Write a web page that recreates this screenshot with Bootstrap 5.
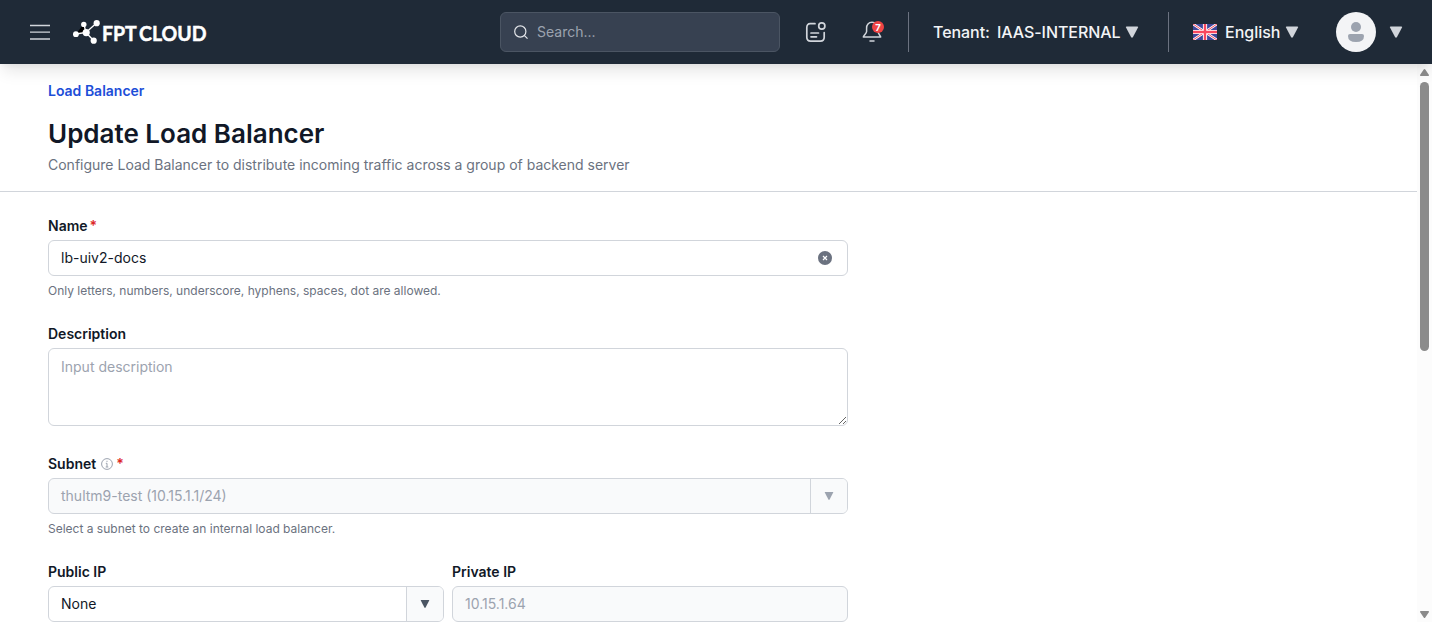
<!DOCTYPE html>
<html lang="en">
<head>
<meta charset="utf-8">
<meta name="viewport" content="width=device-width, initial-scale=1">
<title>Update Load Balancer</title>
<link href="https://cdn.jsdelivr.net/npm/bootstrap@5.3.0/dist/css/bootstrap.min.css" rel="stylesheet">
<style>
  body { font-family: Inter, "Liberation Sans", sans-serif; font-size: 14px; line-height: 20px; color: #111827; height: 622px; overflow: hidden; }
  svg { display: block; flex: none; }
  .topbar { height: 64px; background: #1f2a37; color: #f3f4f6; font-size: 16px; line-height: 24px; font-weight: 500; padding: 0 29px 0 30px; z-index: 5; box-shadow: 0 10px 15px -3px rgba(0,0,0,.1), 0 4px 6px -2px rgba(0,0,0,.05); }
  .search-box { width: 280px; height: 40px; background: #374151; border: 1px solid #4b5563; border-radius: 6px; padding-left: 13px; color: #9ca3af; font-size: 14px; font-weight: 400; }
  .vline { width: 1px; height: 40px; background: #6b7280; }
  .avatar { width: 40px; height: 40px; background: #f3f4f6; }
  .page-body { height: 558px; }
  .page-head { padding: 17px 48px 0; height: 128px; border-bottom: 1px solid #d1d5db; }
  .crumb { color: #1d4ed8; font-weight: 600; text-decoration: none; }
  .page-title { font-size: 26px; line-height: 32px; font-weight: 600; margin: 17px 0 5px; }
  .sub { color: #6b7280; }
  .form-area { width: 800px; margin-left: 48px; padding-top: 24px; }
  .form-label { font-weight: 600; margin-bottom: 4px; display: flex; align-items: center; height: 20px; }
  .req { color: #dc2626; margin-left: 2px; }
  .form-control, .field { font-size: 14px; line-height: 20px; height: 36px; padding: 7px 12px; border: 1px solid #d1d5db; border-radius: 6px; color: #111827; }
  input.form-control { padding: 6px 12px 8px; }
  .form-control::placeholder { color: #9ca3af; }
  .form-control:disabled, .field.off { background: #f9fafb; color: #9ca3af; }
  textarea.form-control { height: 78px; padding-top: 8px; resize: vertical; }
  .field { padding: 0; overflow: hidden; background: #fff; }
  .field .drop { width: 37px; border-left: 1px solid #d1d5db; background: #f9fafb; }
  .hint { font-size: 12px; line-height: 16px; color: #6b7280; margin-top: 7px; }
  .rail { width: 15px; background: #fcfcfc; padding: 5px 3px 4px 3px; }
  .thumb { width: 9px; height: 269px; border-radius: 5px; background: #8b8b8b; margin-top: 6px; }
</style>
</head>
<body>
<header class="topbar d-flex align-items-center position-relative">
  <svg width="20" height="16" viewBox="0 0 20 16" stroke="#d1d5db" stroke-width="1.3"><path d="M0 1.5h20M0 8.2h20M0 15h20"/></svg>
  <svg style="margin-left:23px;margin-top:-2px" width="140" height="36" viewBox="0 -4 140 36">
    <g stroke="#fff" stroke-width="1.300"><path d="M3 17L13 15.500L10.800 7M13 15.500L23.500 6M13 15.500L20.500 23.500"/></g>
    <g fill="#fff"><circle cx="2.900" cy="17.200" r="2.900"/><circle cx="10.800" cy="7.400" r="2.700"/><circle cx="23.700" cy="6.200" r="3.100"/><circle cx="20.700" cy="23.700" r="3.100"/><circle cx="13.200" cy="15.600" r="3.600"/></g>
    <text x="29" y="24" fill="#fff" stroke="#fff" stroke-width=".5" font-family="Lato, sans-serif" font-size="21.500" font-weight="700" word-spacing="-2" textLength="104.500" lengthAdjust="spacingAndGlyphs">FPT CLOUD</text>
  </svg>
  <div class="search-box d-flex align-items-center" style="margin-left:287px">
    <svg width="15" height="15" viewBox="0 0 15 15" fill="none" stroke="#e5e7eb" stroke-width="1.200"><circle cx="6.300" cy="6.500" r="5.600"/><path d="M10.500 10.700L13.500 13.700"/></svg>
    <span class="ms-2">Search...</span>
  </div>
  <svg style="margin-left:25px" width="22" height="22" viewBox="0 0 22 22" fill="none" stroke="#d1d5db" stroke-width="1.700" stroke-linecap="round"><path d="M10 2.700H5.200Q1.800 2.700 1.800 6.700V16.300Q1.800 20.200 5.600 20.200H15.400Q19.200 20.200 19.200 16.300V11.500M6 12H13.500M6 15.800H11.500"/><circle cx="16.800" cy="5" r="3.100"/></svg>
  <div class="position-relative" style="margin-left:35px">
    <svg width="22" height="22" viewBox="0 0 22 22" fill="none" stroke="#d1d5db" stroke-width="1.500" stroke-linejoin="round" stroke-linecap="round"><path d="M10 1.300C6.500 1.300 4.600 3.900 4.600 7V10.500C4.600 12.500 2 14 1.300 16H18.700C18 14 16 12.500 16 10.500V7C16 3.900 14 1.300 10 1.300ZM8 20H12"/></svg>
    <svg class="position-absolute" style="left:10px;top:0" width="12" height="12" viewBox="0 0 12 12"><circle cx="6" cy="6" r="6" fill="#ef4444"/><text x="6" y="9.500" text-anchor="middle" fill="#fff" font-size="9.500" font-weight="700">7</text></svg>
  </div>
  <div class="vline" style="margin-left:24px"></div>
  <span style="margin-left:24px;letter-spacing:-.05px">Tenant:</span><span style="margin-left:7px;letter-spacing:-.05px">IAAS-INTERNAL</span>
  <svg class="ms-1" width="14" height="12" viewBox="0 0 14 12" fill="#d1d5db"><path d="M1.500.500h11q1 0 .500 1L8 11q-1 1.500-2 0L1 1.500q-.500-1 .500-1z"/></svg>
  <div class="vline" style="margin-left:auto;margin-right:24px"></div>
  <svg width="24" height="16" viewBox="0 0 24 16"><path fill="#3f479b" d="M0 0h24v16H0z"/><path stroke="#fff" stroke-width="2.600" d="M0 0L24 16M24 0L0 16"/><path stroke="#f9485e" stroke-width="1" d="M0 0L24 16M24 0L0 16"/><path stroke="#fff" stroke-width="4.200" d="M12 0V16M0 8H24"/><path stroke="#f9485e" stroke-width="2.400" d="M12 0V16M0 8H24"/></svg>
  <span style="margin-left:8.500px">English</span>
  <svg style="margin-left:4.500px" width="14" height="12" viewBox="0 0 14 12" fill="#d1d5db"><path d="M1.500.500h11q1 0 .500 1L8 11q-1 1.500-2 0L1 1.500q-.500-1 .500-1z"/></svg>
  <div class="avatar rounded-circle d-flex align-items-center justify-content-center" style="margin-left:37px;margin-right:13px"><svg width="16" height="20" viewBox="0 0 16 20" fill="#9ca3af"><circle cx="8" cy="5" r="5"/><path d="M2 12h12q2 0 2 2 0 6-8 6t-8-6q0-2 2-2z"/></svg></div>
  <svg width="14" height="12" viewBox="0 0 14 12" fill="#d1d5db"><path d="M1.500.500h11q1 0 .500 1L8 11q-1 1.500-2 0L1 1.500q-.500-1 .500-1z"/></svg>
</header>
<div class="page-body d-flex">
  <main class="flex-grow-1 overflow-hidden">
    <div class="page-head">
      <div><a class="crumb" href="#">Load Balancer</a></div>
      <h1 class="page-title">Update Load Balancer</h1>
      <div class="sub">Configure Load Balancer to distribute incoming traffic across a group of backend server</div>
    </div>
    <form class="form-area">
      <label class="form-label">Name<span class="req">*</span></label>
      <div class="field d-flex align-items-center justify-content-between">
        <span style="margin-left:12px">lb-uiv2-docs</span>
        <svg style="margin-right:15px" width="14" height="14" viewBox="0 0 14 14"><circle cx="7" cy="7" r="7" fill="#6b7280"/><path d="M5 5l4 4M9 5l-4 4" stroke="#fff" stroke-width="1.200"/></svg>
      </div>
      <div class="hint">Only letters, numbers, underscore, hyphens, spaces, dot are allowed.</div>
      <label class="form-label" style="margin-top:25px">Description</label>
      <textarea class="form-control" placeholder="Input description"></textarea>
      <label class="form-label" style="margin-top:28px">Subnet
        <svg style="margin-left:5px" width="12" height="12" viewBox="0 0 12 12" fill="none" stroke="#9ca3af"><circle cx="6" cy="6" r="5.400"/><path d="M6 5.300V9M4.800 5.300H6M4.700 9H7.300M5.400 3.300H6.600"/></svg><span class="req" style="margin-left:3px">*</span></label>
      <div class="field off d-flex"><span class="flex-grow-1" style="padding:7px 12px">thultm9-test (10.15.1.1/24)</span>
        <div class="drop d-flex align-items-center justify-content-center"><svg width="10" height="8" viewBox="0 0 10 8" fill="#9ca3af"><path d="M1 0h8q.500 0 .200.600L5.600 7.500q-.600.800-1.200 0L.800.600Q.500 0 1 0z"/></svg></div></div>
      <div class="hint">Select a subnet to create an internal load balancer.</div>
      <div class="row g-2" style="margin-top:17px">
        <div class="col-6"><label class="form-label">Public IP</label>
          <div class="field d-flex"><span class="flex-grow-1" style="padding:7px 12px">None</span>
            <div class="drop d-flex align-items-center justify-content-center"><svg width="10" height="8" viewBox="0 0 10 8" fill="#4b5563"><path d="M1 0h8q.500 0 .200.600L5.600 7.500q-.600.800-1.200 0L.800.600Q.500 0 1 0z"/></svg></div></div></div>
        <div class="col-6"><label class="form-label">Private IP</label>
          <input class="form-control" value="10.15.1.64" disabled></div>
      </div>
    </form>
  </main>
  <div class="rail d-flex flex-column">
    <svg width="9" height="7" viewBox="0 0 9 7" fill="#8b8b8b"><path d="M4.500 0Q5 0 5.300.500L9 6q.200 1-.700 1H.700Q-.200 7 0 6L3.700.500Q4 0 4.500 0z"/></svg>
    <div class="thumb"></div>
    <svg class="mt-auto" width="9" height="7" viewBox="0 0 9 7" fill="#8b8b8b"><path d="M4.500 7Q5 7 5.300 6.500L9 1q.200-1-.700-1H.700Q-.200 0 0 1L3.700 6.500Q4 7 4.500 7z"/></svg>
  </div>
</div>
<script src="https://cdn.jsdelivr.net/npm/bootstrap@5.3.0/dist/js/bootstrap.bundle.min.js"></script>
</body>
</html>
